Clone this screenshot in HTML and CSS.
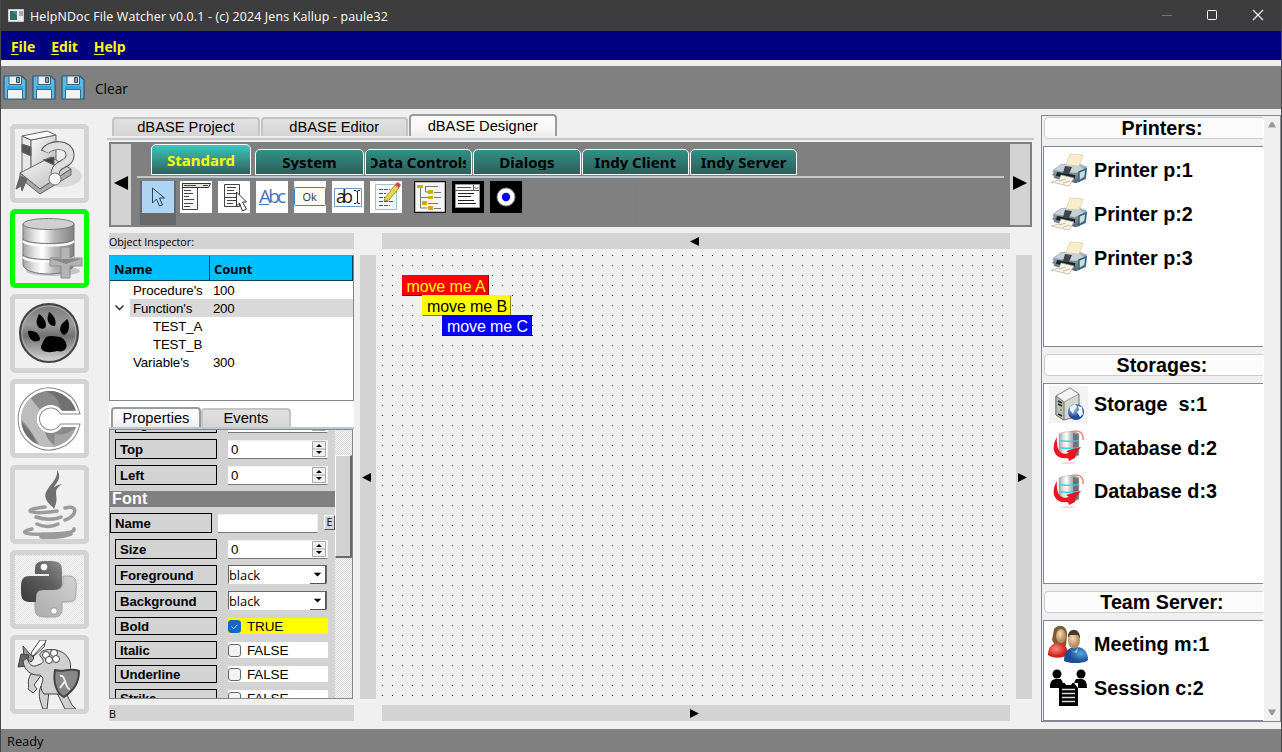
FILE: index.html
```html
<!DOCTYPE html>
<html lang="en">
<head>
<meta charset="utf-8">
<title>HelpNDoc File Watcher</title>
<link rel="stylesheet" href="styles.css">
</head>
<body>
<svg class="defs" width="0" height="0">
<defs>
<linearGradient id="metal"><stop offset="0" stop-color="#a5a5a5"/><stop offset=".22" stop-color="#e2e2e2"/><stop offset=".38" stop-color="#fff"/><stop offset=".6" stop-color="#bbb"/><stop offset="1" stop-color="#808080"/></linearGradient>
<linearGradient id="page" x2="1" y2="1"><stop offset="0" stop-color="#fafafa"/><stop offset="1" stop-color="#b5b5b5"/></linearGradient>
<linearGradient id="dark" x1="1" x2="0" y2="1"><stop offset="0" stop-color="#8d8d8d"/><stop offset=".4" stop-color="#606060"/><stop offset="1" stop-color="#3a3a3a"/></linearGradient>
<linearGradient id="light" x1="1" x2="0" y2="1"><stop offset="0" stop-color="#d2d2d2"/><stop offset="1" stop-color="#acacac"/></linearGradient>
<linearGradient id="disc" x2="0" y2="1"><stop offset="0" stop-color="#777"/><stop offset=".35" stop-color="#9a9a9a"/><stop offset=".55" stop-color="#707070"/><stop offset="1" stop-color="#d8d8d8"/></linearGradient>
<linearGradient id="pbody" x2="0" y2="1"><stop offset="0" stop-color="#b9c4cc"/><stop offset="1" stop-color="#50636f"/></linearGradient>
<radialGradient id="skin" cx=".4" cy=".35"><stop offset="0" stop-color="#f6dfb8"/><stop offset="1" stop-color="#b98d5c"/></radialGradient>
<radialGradient id="redc" cx=".4" cy=".4"><stop offset="0" stop-color="#ff8c7c"/><stop offset="1" stop-color="#cf2119"/></radialGradient>
<radialGradient id="bluec" cx=".7" cy=".4"><stop offset="0" stop-color="#55a8dd"/><stop offset="1" stop-color="#1c4c93"/></radialGradient>
<radialGradient id="globe" cx=".35" cy=".3"><stop offset="0" stop-color="#b8d4f5"/><stop offset="1" stop-color="#1d4c9c"/></radialGradient>
<pattern id="mesh" width="2" height="2" patternUnits="userSpaceOnUse"><path fill="#fff" d="M0 0h2v2H0z"/><path fill="#dedede" d="M0 0h1v1H0zM1 1h1v1H1z"/></pattern>
<clipPath id="cshape"><path d="M61 27A28 28 0 1 0 61 43H47A14 14 0 1 1 47 27z"/></clipPath>
<symbol id="floppy" viewBox="0 0 24 25"><path fill="#5cb9e8" stroke="#31536b" stroke-width="1.2" d="M1 1h18l4 4v19H1z"/><path fill="#e9eef0" stroke="#44606f" d="M6 1h12.500v8.500H6z"/><path fill="#8aa3b0" stroke="#365060" d="M13.500 2.500h3v5h-3z"/><path fill="#38a3dc" d="M4 11h16v3H4z"/><path fill="#f3f3f1" stroke="#496574" d="M4.500 14.500h15V24h-15z"/></symbol>
<symbol id="printer" viewBox="0 0 38 34"><path fill="#2d6b89" d="M2 22l7-6 27-3v12l-10 5z"/><path fill="url(#pbody)" d="M3 17l8-6 18-1 8 4-1 12-10 4-14-3-8-2z"/><path fill="#f8eecb" stroke="#d9cca6" stroke-width=".7" d="M20 1l13 1-4 11-13-1z"/><path fill="#c7d1d7" d="M4 17l7-5 5 0 13 1 5 3-9 4-15-2z"/><path fill="#3c464d" d="M15 13l7 1-3 7-6-1z"/><path fill="#d5dadb" stroke="#2a6785" stroke-width="1.500" d="M29 19l7-3-1 8-6 4z"/><path fill="#17252f" d="M7 19l18 3v4L6 23z"/><path fill="#faf5e4" stroke="#b8b09a" stroke-width=".7" d="M11 22l13 3-5 8-18-4 8-2z"/><path stroke="#c0b9a7" d="M9 28l7-2M13 30l7-2"/></symbol>
<symbol id="dbred" viewBox="0 0 34 34"><path fill="none" stroke="#ef8585" stroke-width="1.500" d="M15 3c9-4 16-2 15 7"/><path fill="url(#metal)" stroke="#aaa" stroke-width=".5" d="M6 4c3-3 18-3 20 0v21c-3 3-17 3-20 0z"/><path fill="#6c7377" d="M20 3l5 2v20l-5 1z"/><path fill="none" stroke="#31d7e7" stroke-width="1.300" d="M6 10.500c4 1 17 1 20 0M6 17.500c4 1 17 1 20 0"/><path fill="#e91521" d="M4 7C-3 18 1 30 15 28l1 3 6-3 1-5 5-6-15 4 3 2C7 26 3 19 4 7z"/><ellipse cx="15" cy="33" rx="7" ry="1" fill="#f3dada"/></symbol>
<symbol id="spin" viewBox="0 0 14 16"><path fill="#f0f0f0" stroke="#aaa" d="M.5.500h13v15H.500zM0 8h14"/><path d="M4 6l3-3 3 3zM4 10h6l-3 3z"/></symbol>
</defs>
</svg>
<div class="window">
  <header class="titlebar">
    <svg class="appicon" viewBox="0 0 16 13"><path fill="#eee" stroke="#ccc" d="M.5.500h15v12H.500z"/><path fill="#28715f" d="M2 2h7v9H2z"/><path fill="#517faa" d="M4 2h5v5z"/><path fill="#a9a9a9" d="M11 2h4v5h-4z"/></svg>
    <span class="caption">HelpNDoc File Watcher v0.0.1 - (c) 2024 Jens Kallup - paule32</span>
    <svg class="winctl" viewBox="0 0 110 14"><path stroke="#737373" d="M1 6.500h10"/><rect x="46.500" y="1.500" width="9" height="9" rx="1" fill="none" stroke="#fff"/><path stroke="#fff" stroke-width="1.100" d="M92 1l10 10M102 1L92 11"/></svg>
  </header>
  <nav class="menu"><span><u>F</u>ile</span><span><u>E</u>dit</span><span><u>H</u>elp</span></nav>
  <div class="toolbar"><svg><use href="#floppy"/></svg><svg><use href="#floppy"/></svg><svg><use href="#floppy"/></svg><span>Clear</span></div>
  <main class="body">
    <aside class="side">
      <div class="sbtn"><svg viewBox="0 0 69 69"><ellipse cx="46" cy="47" rx="21" ry="11" fill="#dadada"/><g stroke="#666" stroke-linejoin="round"><path fill="#e8e8e8" d="M7 7l9 4v38L7 44z"/><path fill="url(#page)" d="M16 11l25-5v36l-25 9z"/><path fill="#fafafa" d="M7 7l25-5 9 4-25 5z"/><path fill="#555" d="M7 15l9 3v9l-9-4z"/><path fill="url(#page)" d="M5 44l31-16 20 12-31 20z"/><path fill="#aaa" d="M5 44v5l20 16 31-19v-6L25 60z"/><path fill="#444" d="M28 31l11-3v8z"/><path fill="#666" d="M5 47l-4 13 5-3 1 5 5-12z"/></g><path fill="none" stroke="#5a5a5a" stroke-width="9" d="M30 23c3-8 25-10 25 3 0 11-15 7-15 20"/><path fill="none" stroke="#dedede" stroke-width="7" d="M30.500 22.500c3-7 24.500-9.500 24.500 3.500 0 11-15 7-15 19.500"/><circle cx="40" cy="50" r="6" fill="#f5f5f5" stroke="#777"/></svg></div>
      <div class="sbtn on"><svg viewBox="0 0 69 69"><ellipse cx="38" cy="57" rx="27" ry="5" fill="#c5c5c5"/><path fill="url(#metal)" stroke="#777" d="M8 10v41c3 12 48 12 51 0V10z"/><ellipse cx="33.500" cy="10" rx="25.500" ry="5.500" fill="#d0d0d0" stroke="#777"/><path fill="none" stroke="#fff" stroke-width="2" d="M8 27c5 6 46 6 51 0M8 43c5 6 46 6 51 0"/><path fill="none" stroke="#777" d="M8 25c5 6 46 6 51 0M8 41c5 6 46 6 51 0"/><path fill="#b4b4b4" stroke="#8c8c8c" stroke-linejoin="round" d="M46 33h9v11h12v8H55v12h-9V52H35v-8h11z"/><path fill="#888" d="M36 45h30l-15 5z"/></svg></div>
      <div class="sbtn"><svg viewBox="0 0 69 69"><circle cx="34" cy="34" r="29" fill="url(#disc)" stroke="#444" stroke-width="2"/><circle cx="34" cy="34" r="27" fill="none" stroke="#ccc" opacity=".6"/><path d="M26 47c3-5 3-10 10-10 8 1 11 0 14 5 4 6 0 12-8 10-6 2-17 2-16-5zM13 32c7-1 12 3 12 9-6 4-12-1-12-9zM24 15c5 3 9 10 6 14-5 3-10-3-8-9zM34 13c5 3 8 9 6 14-5 1-9-6-7-10zM52 20c4 5 2 15-3 16-6-3-4-11 0-13z"/></svg></div>
      <div class="sbtn white"><svg viewBox="0 0 69 69"><path fill="none" stroke="#888" stroke-width="7" d="M61 27A28 28 0 1 0 61 43H47A14 14 0 1 1 47 27z"/><path fill="none" stroke="#fff" stroke-width="5" d="M61 27A28 28 0 1 0 61 43H47A14 14 0 1 1 47 27z"/><g clip-path="url(#cshape)"><path fill="#8a8a8a" d="M0 0h69v69H0z"/><path fill="#bdbdbd" d="M14 10c4 10 12 14 14 22 4 8-4 18 14 32H26C18 50 12 40 4 34z"/><path fill="#707070" d="M5 38c8 6 16 16 18 28L8 58zM30 4l20 6 14 16-18 0C44 14 38 9 26 6z"/><path fill="#a6a6a6" d="M40 50c10 2 16-3 24-8l-10 20-16 4z"/></g></svg></div>
      <div class="sbtn"><svg viewBox="0 0 69 69"><path fill="#707070" d="M42 0c9 13-13 17-4 33l1 5C17 21 44 16 42 0zM47 14c-12 9-1 10-8 25-9-14-3-23 8-25z"/><path fill="none" stroke="#9b9b9b" stroke-width="3.500" stroke-linecap="round" d="M30 37c-27 3-14 8 12 4M21 47c8 3 19 3 25 0M22 54c7 3 15 3 21 0M17 59c-14 3-7 6 12 5 17 0 31-1 30-5M26 67c11 1 22 0 30-3M50 38c15-4 11 9 0 12"/></svg></div>
      <div class="sbtn"><svg viewBox="0 0 69 69"><rect width="69" height="69" fill="url(#mesh)"/><path fill="url(#light)" stroke="#a0a0a0" d="M48 21h7c8 0 6 12 6 18 0 8-5 8-10 8H47v6c0 10-6 9-13 9-9 0-14 0-14-9V42c0-7 4-8 10-8h12c6 0 6-4 6-13z"/><path fill="url(#dark)" d="M20 15c0-8 3-9 13-9s14 1 14 9v13c0 6-4 7-10 7H29c-8 0-8 4-8 12h-7c-8-1-8-5-8-14s2-12 9-12h19v-2H20z"/><circle cx="29" cy="12" r="3.300" fill="#fff"/><circle cx="39" cy="56" r="3.300" fill="#fff" stroke="#999"/></svg></div>
      <div class="sbtn"><svg viewBox="0 0 69 69"><g fill="#d0d0d0" stroke="#444" stroke-linejoin="round"><path fill="#fff" d="M16 13L25 0h6l-2 7-11 10zM18 16L30 3"/><path fill="#999" d="M8 6l5 6 6 6-3 4-7-5z"/><path fill="#666" d="M3 27l3-13 8 1-3 11z"/><path d="M16 34c-5 8-1 11-3 15l5 4 4-4-3-4 8-11zM26 46c-3 7-2 13 2 23h4l2-18zM42 53l8 16h11l-4-4-6-12z"/><path d="M25 16c-2-9 23-9 28 2 7 8-2 29-8 36H29c-8-9 4-14-4-19-8 1-16-4-17-14l4-3c3 9 7 9 11 7 6-2 7-4 2-9z"/><circle cx="31" cy="15" r="3.500" fill="#fff"/><circle cx="39" cy="13" r="3.500" fill="#fff"/><circle cx="34" cy="20" r="3.500" fill="#fff"/><circle cx="41" cy="19" r="3.500" fill="#fff"/><path fill="#888" stroke-width="2" d="M40 30c9 3 14-3 24 1 0 12-5 19-15 26-8-4-11-15-9-27z"/></g><path fill="none" stroke="#eee" stroke-width="2" d="M45 36c6-2 5 14 10 13M50 41l-5 7"/></svg></div>
    </aside>

    <section class="center">
      <div class="tabs outer"><span class="tab">dBASE Project</span><span class="tab">dBASE Editor</span><span class="tab act">dBASE Designer</span></div>
      <div class="palette">
        <div class="pgbtn"><svg viewBox="0 0 16 16"><path d="M15 0v15L0 7.500z"/></svg></div>
        <div class="pal">
          <div class="ptabs"><span class="pt cur"><b>Standard</b></span><span class="pt w2"><b>System</b></span><span class="pt"><b>Data Controls</b></span><span class="pt"><b>Dialogs</b></span><span class="pt"><b>Indy Client</b></span><span class="pt"><b>Indy Server</b></span></div>
          <div class="tools">
            <div class="toolset">
            <div class="tool sel"><svg viewBox="0 0 32 32"><rect width="32" height="32" fill="#b0d4f3"/><path fill="none" stroke="#29455e" d="M10.500 7v15l4-4 3 7 3-1-3-7h5z"/></svg></div>
            <svg class="tool" viewBox="0 0 32 32"><path fill="#fff" d="M0 0h32v32H0z"/><path fill="#f9f9f9" stroke="#444" d="M2.500 2.500h15v26h-15z"/><path fill="#e5e5dc" stroke="#333" d="M2.500 2.500h28l-2 4h-26z"/><path stroke="#444" d="M4 4.500h12M4 9.500h7M4 12.500h9M4 15.500h5M4 18.500h10M4 22.500h9M4 25.500h6M23 4.500h5"/></svg>
            <svg class="tool" viewBox="0 0 32 32"><path fill="#fff" d="M0 0h32v32H0z"/><path fill="#fff" stroke="#444" d="M6.500 3.500h15v22h-15z"/><path stroke="#444" d="M9 6.500h9M9 9.500h7M9 12.500h9M7 16.500h14M9 19.500h9M9 22.500h6"/><path fill="#fff" stroke="#333" d="M18.500 11v14l3-3 3 8 4-2-4-7h4z"/></svg>
            <svg class="tool" viewBox="0 0 32 32"><path fill="#fff" d="M0 0h32v32H0z"/><text class="abc" x="3" y="22" textLength="27">Abc</text><path stroke="#4874bd" d="M3 23.500h10"/></svg>
            <svg class="tool" viewBox="0 0 32 32"><path fill="#fff" d="M0 0h32v32H0z"/><rect x=".5" y="6.500" width="31" height="18" rx="1" fill="#fffaf0" stroke="#3c83bd"/><text class="ok" x="8.500" y="20">Ok</text></svg>
            <svg class="tool" viewBox="0 0 32 32"><path fill="#fff" d="M0 0h32v32H0z"/><path fill="#fff" stroke="#709abd" d="M2.500 7.500h27v18h-27z"/><text class="edit" x="4" y="22" textLength="17">ab</text><path fill="none" stroke="#222" d="M22 9.500h2l1 1 1-1h2M25.500 10v12M22 22.500h2l1-1 1 1h2"/></svg>
            <svg class="tool" viewBox="0 0 32 32"><path fill="#fff" d="M0 0h32v32H0z"/><path fill="#f4f9fc" stroke="#a0bed0" d="M5.500 3.500h21v25h-21z"/><path stroke="#555" stroke-dasharray="4 1" d="M9 8.500h11M9 12.500h7M9 16.500h8M9 20.500h14M9 24.500h11"/><path fill="#efd34f" stroke="#878128" stroke-width=".8" d="M15 17L25 4l4 3-10 12-5 1z"/><path fill="#dc4052" d="M25 3l3-2 3 3-2 3z"/></svg>
            <svg class="tool gap" viewBox="0 0 32 32"><path fill="#f6f6f6" stroke="#111" stroke-width="1.500" d="M.5.500h31v31H.5z"/><path fill="none" stroke="#777" d="M6.500 7v20h7M7 16.500h7M11 5.500h13M20 11.500h7M20 16.500h7M14 22.500h10M20 27.500h7M11.500 6v5h7"/><path fill="#d9a800" d="M3 4h6v3H3zM14 9h5v4h-5zM14 15h5v3h-5zM8 20h5v4H8zM14 25h5v4h-5z"/></svg>
            <svg class="tool" viewBox="0 0 32 32"><path d="M0 0h32v32H0z"/><path fill="#fff" stroke="#999" d="M3.500 3.500h24v23h-24z"/><path fill="none" stroke="#555" d="M3 9.500h24M5 6.500h14M21.500 4v5m1-3 2 2 2-2"/><path stroke="#222" d="M6 12.500h16M6 15.500h13M6 19.500h16M6 22.500h18"/></svg>
            <svg class="tool" viewBox="0 0 32 32"><path d="M0 0h32v32H0z"/><circle cx="16" cy="16" r="9" fill="#fff" stroke="#888"/><circle cx="16" cy="16" r="4.200" fill="#00f"/></svg>
            </div>
          </div>
        </div>
        <div class="pgbtn"><svg viewBox="0 0 16 16"><path d="M0 0v15l15-7.500z"/></svg></div>
      </div>

      <div class="work">
        <div class="inspector">
          <div class="bar lab">Object Inspector:</div>
          <div class="tree">
            <div class="thead"><span>Name</span><span>Count</span></div>
            <div class="tr"><i></i><span>Procedure's</span><em>100</em></div>
            <div class="tr hit"><i><svg viewBox="0 0 9 6"><path fill="none" stroke="#222" stroke-width="1.300" d="M.5.500l4 4 4-4"/></svg></i><span>Function's</span><em>200</em></div>
            <div class="tr sub"><i></i><span>TEST_A</span></div>
            <div class="tr sub"><i></i><span>TEST_B</span></div>
            <div class="tr"><i></i><span>Variable's</span><em>300</em></div>
          </div>
          <div class="tabs inner"><span class="tab act">Properties</span><span class="tab">Events</span></div>
          <div class="props">
            <div class="rows">
              <div class="row"><label>Height</label><div class="num"><span></span><svg class="spin"><use href="#spin"/></svg></div></div>
              <div class="row"><label>Top</label><div class="num"><span>0</span><svg class="spin"><use href="#spin"/></svg></div></div>
              <div class="row"><label>Left</label><div class="num"><span>0</span><svg class="spin"><use href="#spin"/></svg></div></div>
              <div class="group">Font</div>
              <div class="row name"><label>Name</label><div class="num"></div><button class="e">E</button></div>
              <div class="row"><label>Size</label><div class="num"><span>0</span><svg class="spin"><use href="#spin"/></svg></div></div>
              <div class="row"><label>Foreground</label><div class="combo"><span>black</span><svg viewBox="0 0 16 16"><path d="M4 6h8l-4 4z"/></svg></div></div>
              <div class="row"><label>Background</label><div class="combo"><span>black</span><svg viewBox="0 0 16 16"><path d="M4 6h8l-4 4z"/></svg></div></div>
              <div class="row chk"><label>Bold</label><div class="cb yes"><i><svg viewBox="0 0 13 13"><path fill="none" stroke="#fff" d="M3 6.500l2.500 2.500L10 4.500"/></svg></i>TRUE</div></div>
              <div class="row chk"><label>Italic</label><div class="cb"><i></i>FALSE</div></div>
              <div class="row chk"><label>Underline</label><div class="cb"><i></i>FALSE</div></div>
              <div class="row chk"><label>Strike</label><div class="cb"><i></i>FALSE</div></div>
            </div>
            <div class="scroll"><div class="thumb"></div></div>
          </div>
          <div class="bar lab foot">B</div>
        </div>
        <div class="vbar"><svg viewBox="0 0 9 9"><path d="M9 0v9L0 4.500z"/></svg></div>
        <div class="stage">
          <div class="bar"><svg viewBox="0 0 9 9"><path d="M9 0v9L0 4.500z"/></svg></div>
          <div class="canvas">
            <div class="mv a">move me A</div><div class="mv b">move me B</div><div class="mv c">move me C</div>
          </div>
          <div class="bar"><svg viewBox="0 0 9 9"><path d="M0 0v9l9-4.500z"/></svg></div>
        </div>
        <div class="vbar"><svg viewBox="0 0 9 9"><path d="M0 0v9l9-4.500z"/></svg></div>
      </div>
    </section>

    <aside class="right">
      <div class="lists">
        <h2>Printers:</h2>
        <div class="list"><div class="it"><svg><use href="#printer"/></svg>Printer p:1</div><div class="it"><svg><use href="#printer"/></svg>Printer p:2</div><div class="it"><svg><use href="#printer"/></svg>Printer p:3</div></div>
        <h2>Storages:</h2>
        <div class="list sto"><div class="it"><svg class="srv" viewBox="0 0 39 37"><path fill="#f3f3f3" d="M0 0h39v37H0z"/><path fill="#d5d7d2" stroke="#777" d="M7 10L21 2l9 6v22l-15 4-8-5z"/><path fill="#f5f5f1" stroke="#999" d="M7 10L21 2l9 6-15 8z"/><path fill="#b9bdb6" stroke="#777" d="M7 10l8 6v18l-8-5z"/><path fill="none" stroke="#222" stroke-width="1.500" d="M9 15l4 2M9 18l4 2M9 28l4 2"/><circle cx="12" cy="24" r="1" fill="#3b3"/><circle cx="27" cy="26" r="8" fill="url(#globe)"/><path fill="#f2f6fa" d="M21 21l5-3 2 3-3 3-1 4-3-4zM29 20l4 1 1 7-3 3-3-5 2-2z"/></svg>Storage&nbsp; s:1</div><div class="it"><svg class="db"><use href="#dbred"/></svg>Database d:2</div><div class="it"><svg class="db"><use href="#dbred"/></svg>Database d:3</div></div>
        <h2>Team Server:</h2>
        <div class="list team"><div class="it"><svg class="meet" viewBox="0 0 40 38"><path fill="#795c32" d="M6 4c6-7 14-2 13 6l-1 11-11-1-3-5z"/><path fill="url(#redc)" d="M0 30c0-9 5-12 10-12 6 0 10 4 10 12-5 3-15 4-20 0z"/><ellipse cx="13" cy="11" rx="5" ry="7" fill="url(#skin)"/><path fill="url(#bluec)" d="M16 36c0-11 6-14 12-14 7 0 12 4 12 13-4 4-18 4-24 1z"/><ellipse cx="26" cy="15.500" rx="6" ry="8" fill="url(#skin)"/><path fill="#4b3a2a" d="M20 13c-1-11 13-11 12 1l-2-4h-8z"/><path fill="#8bc7e6" d="M21 23l5 4 4-4-1 5-4-1z"/></svg>Meeting m:1</div><div class="it"><svg class="sess" viewBox="0 0 38 38"><circle cx="7" cy="5" r="4.500"/><circle cx="31" cy="5" r="4.500"/><path d="M0 19c0-10 4-9 11-9l2 4-4 5zM37 19c0-10-4-9-11-9l-2 4 4 5zM9 14h19v23H9z"/><path fill="#fff" d="M14 13h9l-2 3h-5z"/><path stroke="#ddd" stroke-width="1.500" d="M12 20.500h13M12 24.500h13M12 28.500h13M12 32.500h13"/></svg>Session c:2</div></div>
      </div>
      <div class="rscroll"><svg viewBox="0 0 8 7"><path fill="#999" d="M0 6.500L3 1h2l3 5.500z"/></svg><svg viewBox="0 0 8 7"><path fill="#999" d="M0 .5L3 6h2l3-5.500z"/></svg></div>
    </aside>
  </main>
  <footer class="status">Ready</footer>
</div>
</body>
</html>
```
FILE: styles.css
```css
* { box-sizing: border-box; }
body { margin: 0; font-family: "Liberation Sans", Arial, sans-serif; color: #000; background: #3d3d3d; overflow: hidden; }
svg { display: block; }
.defs { position: absolute; }
.window { width: 1282px; height: 752px; border: solid #484848; border-width: 0 1px 1px; display: flex; flex-direction: column; background: #f0f0f0; }
.titlebar { height: 31px; background: #3d3d3d; display: flex; align-items: center; padding: 0 16px 0 7px; flex: none; }
.appicon { width: 16px; height: 13px; }
.caption { color: #fff; font: 12.4px/31px "Open Sans", sans-serif; letter-spacing: .16px; margin-left: 6px; flex: 1; padding-top: 2px; white-space: nowrap; }
.winctl { width: 110px; height: 14px; margin-right: -6px; }
.menu { height: 29px; background: #000080; color: #ff0; display: flex; gap: 16px; padding-left: 10px; font: bold 14px/31px "Open Sans", sans-serif; letter-spacing: -.1px; flex: none; }
.menu u { text-underline-offset: 2px; }
.toolbar { margin-top: 6px; height: 43px; background: #808080; display: flex; align-items: center; gap: 5px; padding-left: 2px; flex: none; }
.toolbar svg { width: 24px; height: 25px; margin-top: -1px; }
.toolbar span { font: 13.7px/20px "Open Sans", sans-serif; margin: 2px 0 0 5px; }
.body { height: 620px; display: flex; flex: none; }
.side { width: 106px; padding: 15px 0 0 9px; display: flex; flex-direction: column; gap: 6.17px; }
.sbtn { width: 79px; height: 79px; flex: none; border: 5px solid #d3d3d3; border-radius: 5px; overflow: hidden; }
.sbtn svg { width: 69px; height: 69px; }
.on { border-color: #0f0; }
.white { background: #fff; }
.center { width: 927px; padding-top: 6px; }
.tabs { display: flex; align-items: flex-end; border-bottom: 2px solid #c2c7cb; }
.tab { border: 2px solid #c4c4c3; border-bottom: 0; border-radius: 4px 4px 0 0; background: linear-gradient(#e1e1e1, #d5d5d5); text-align: center; overflow: hidden; }
.tab.act { border-color: #9b9b9b; background: linear-gradient(#fafafa 50%, #ededed); }
.outer { height: 25px; padding: 0 0 2px 5px; }
.outer .tab { width: 147.5px; height: 19px; margin-right: 1px; font-size: 14.7px; line-height: 17px; }
.outer .act { height: 22px; line-height: 20px; }
.palette { margin: 2px 2px 0; height: 85px; border: 2px solid #808080; background: #808080; display: flex; }
.pgbtn { width: 20px; background: #d3d3d3; display: flex; align-items: center; justify-content: center; flex: none; }
.pgbtn svg { width: 15px; height: 15px; margin-top: -2px; }
.pal { flex: 1; padding: 0 6px; min-width: 0; }
.ptabs { height: 34px; border-bottom: 2px solid #c2c7cb; padding: 0 0 1px 14px; display: flex; align-items: flex-end; gap: 1px; }
.pt { width: 107.3px; height: 26px; border: 1px solid #fff; border-radius: 5px 5px 0 0; background: linear-gradient(#2f9084, #2f5f5b); display: flex; justify-content: center; overflow: hidden; padding: 0 5px; }
.pt b { font: bold 15px/25px "Noto Sans", sans-serif; height: 20px; overflow: hidden; white-space: nowrap; display: flex; justify-content: center; width: 100%; }
.pt.w2 { width: 109px; }
.pt.cur { width: 100px; height: 31px; margin-right: 3px; color: #ff0; background: linear-gradient(#3cc8bc, #2f5f5b); }
.cur b { height: 28px; line-height: 30px; }
.tools { height: 47px; padding-left: 2px; }
.toolset { width: 498px; height: 47px; border: solid #777f89; border-width: 1px 1px 0; display: flex; padding: 2px 0 0 2px; gap: 6px; }
.tool { width: 32px; height: 32px; flex: none; }
.tool.sel { height: 44px; background: #696969; box-shadow: -2px 0 #696969, 2px 0 #696969; }
.tool.gap { margin-left: 6px; }
.abc { font: 19px "Open Sans", sans-serif; fill: #4874bd; }
.ok { font: 11px "Open Sans", sans-serif; fill: #333; }
.edit { font: 18px "Open Sans", sans-serif; fill: #222; }
.work { display: flex; gap: 6px; padding: 6px 2px 0; }
.bar { height: 16px; background: #d3d3d3; flex: none; display: flex; justify-content: center; align-items: center; }
.bar svg, .vbar svg { width: 9px; height: 9px; margin-right: 3px; }
.inspector { width: 245px; }
.bar.lab { display: block; font: 10.7px/18px "Open Sans", sans-serif; }
.tree { margin-top: 6px; height: 146px; border: 1px solid #828790; background: #fff; font-size: 13.3px; }
.thead { display: flex; height: 25px; font: bold 13px/27px "Open Sans", sans-serif; letter-spacing: -.15px; background: #00bfff; border-bottom: 1px solid #00405a; }
.thead span { padding-left: 4px; width: 143px; border-right: 1px solid #00405a; }
.thead span:first-child { width: 100px; }
.tr { display: flex; height: 18px; line-height: 19px; }
.tr i { width: 20px; display: flex; align-items: center; justify-content: center; }
.tr i svg { width: 9px; height: 6px; margin-right: 1px; }
.tr span { width: 80px; padding-left: 3px; letter-spacing: -.08px; }
.tr em { font-style: normal; width: 143px; padding-left: 3px; letter-spacing: -.3px; }
.tr.hit span, .tr.hit em { background: #d9d9d9; }
.tr.sub i { width: 40px; }
.tr.sub span { letter-spacing: -.2px; }
.inner { height: 28px; background: #fff; padding-left: 2px; }
.inner .tab { width: 90px; height: 19px; font-size: 14.7px; line-height: 17px; }
.inner .act { height: 20px; line-height: 18px; }
.props { height: 270px; border: 1px solid #828790; width: 244px; background: #d3d3d3; display: flex; overflow: hidden; }
.rows { width: 225px; height: 268px; overflow: hidden; display: flex; flex-direction: column; gap: 6px; }
.rows > :first-child { margin-top: -17px; }
.row { flex: none; height: 20px; display: flex; padding-left: 5px; gap: 11px; }
.row label { width: 102px; border: 1px solid #000; font: bold 13.2px/19px "Liberation Sans", sans-serif; letter-spacing: -.05px; padding-left: 4px; }
.num { width: 100px; height: 19px; margin-top: 1px; background: #fff; border: solid #eee; border-width: 1px 1px 0 0; border-bottom: 1px solid #777; display: flex; justify-content: space-between; padding: 0 1px 0 3px; font-size: 13.3px; line-height: 17px; }
.spin { width: 14px; height: 16px; }
.group { height: 16px; background: #808080; color: #fff; font: bold 16px/16px "Liberation Sans", sans-serif; letter-spacing: .2px; padding-left: 2px; flex: none; }
.row.name { padding-left: 0; gap: 6px; }
.e { width: 11px; height: 15px; margin-top: 2px; padding: 0; border: 1px solid; border-color: #fff #555 #555 #fff; background: #d3d3d3; font: 10.5px/13px "Open Sans", sans-serif; text-align: center; }
.combo { width: 99px; height: 19px; border: 1px solid #666; border-bottom-color: #fff; background: #fff; display: flex; justify-content: space-between; font: 12.8px/19px "Open Sans", sans-serif; }
.combo svg { width: 16px; height: 18px; border-right: 1px solid #555; border-bottom: 1px solid #555; }
.row.chk { height: 18px; }
.chk label { line-height: 17px; }
.cb { width: 100px; height: 16px; margin-top: 1px; background: #fff; font-size: 13.5px; letter-spacing: -.15px; line-height: 17px; display: flex; gap: 6px; }
.cb i { width: 13px; height: 13px; margin-top: 2px; border: 1px solid #666; border-radius: 3px; background: #f3f3f3; }
.yes { background: #ff0; }
.yes i { background: #1467c4; border-color: #1467c4; }
.yes svg { width: 11px; height: 11px; }
.scroll { width: 17px; background: repeating-conic-gradient(#d3d3d3 0 25%, #fff 0 50%) 0 0/2px 2px; padding-top: 25px; }
.thumb { height: 103px; background: #d3d3d3; border: solid; border-width: 1px 2px 2px 1px; border-color: #fff #696969 #696969 #fff; }
.foot { margin-top: 6px; }
.vbar { width: 16px; height: 444px; margin-top: 22px; background: #d3d3d3; display: flex; align-items: center; justify-content: center; flex: none; }
.stage { width: 628px; display: flex; flex-direction: column; gap: 6px; flex: none; }
.canvas { height: 444px; position: relative; background: linear-gradient(90deg, transparent 1px, #f0f0f0 1px) 0 0/10px 10px, linear-gradient(#000 1px, #f0f0f0 1px) 0 0/10px 10px; }
.mv { position: absolute; height: 21px; font-size: 16px; line-height: 21px; padding-left: 1px; text-align: center; border: 1px solid; white-space: nowrap; letter-spacing: -.1px; }
.a { left: 20px; top: 20px; width: 87px; background: #f00; color: #ff0; border-color: #f00 #800 #800 #f00; }
.b { left: 40px; top: 40px; width: 89px; background: #ff0; color: #000; border-color: #ff0 #880 #880 #ff0; }
.c { left: 60px; top: 60px; width: 90px; background: #00f; color: #fff; border-color: #00f #008 #008 #00f; }
.right { width: 240px; height: 607px; margin: 6px 0 0 7px; border: 1px solid #828790; display: flex; flex: none; }
.lists { width: 221px; overflow: hidden; padding: 1px 0 0 1px; flex: none; }
h2 { margin: 0 0 7px 1px; height: 22px; width: 236px; border: 1px solid #ccc; border-radius: 4px; background: #fcfcfc; font: bold 19.7px/21px "Liberation Sans", sans-serif; text-align: center; }
.list { height: 201px; width: 236px; border: 1px solid #828790; background: #fff; margin-bottom: 7px; padding-top: 1px; }
.team { height: 101px; }
.it { height: 44px; display: flex; align-items: center; font-weight: bold; font-size: 19.75px; gap: 6px; padding-left: 6px; line-height: 44px; }
.sto { padding-top: 0; }
.sto .it { height: 43.6px; line-height: 43px; margin-top: -1px; }
.sto .it + .it { margin-top: 0; }
.it svg { width: 38px; height: 34px; }
.it .srv { width: 39px; height: 37px; margin-left: -1px; }
.it .db { width: 34px; height: 34px; margin: -2px 1px 0 3px; }
.it .meet { width: 40px; height: 38px; margin-left: -2px; }
.it .sess { width: 38px; height: 38px; }
.rscroll { flex: 1; border-left: 1px solid #fff; display: flex; flex-direction: column; align-items: center; justify-content: space-between; padding: 5px 0; }
.rscroll svg { width: 8px; height: 7px; }
.status { flex: 1; background: #808080; font: 12.8px/25px "Open Sans", sans-serif; padding-left: 6px; }
```
